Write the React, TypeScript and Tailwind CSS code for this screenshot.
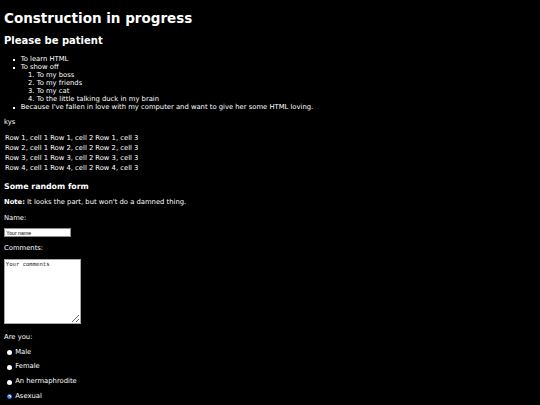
import React from "react";

function Bullet() {
  return <span className="w-[2px] h-[2px] bg-white mt-[3px] mr-[5.4px] shrink-0" />;
}

export default function App() {
  const rows = [1, 2, 3, 4];
  return (
    <div className="min-h-[405px] bg-black text-white px-[4px] pt-[10px] pb-[4px] text-[6.8px] leading-[7.9px] overflow-hidden font-['DejaVu_Sans',Verdana,sans-serif]">
      <h1 className="text-[13.5px] leading-[16px] font-bold m-0">Construction in progress</h1>
      <h2 className="text-[10px] leading-[12px] font-bold mt-[9.2px]">Please be patient</h2>
      <ul className="pl-[9.3px] mt-[9px]">
        <li className="flex">
          <Bullet />
          <span>To learn HTML</span>
        </li>
        <li className="flex">
          <Bullet />
          <div>
            <div>To show off</div>
            <ol className="list-decimal pl-[16px]">
              <li>To my boss</li>
              <li>To my friends</li>
              <li>To my cat</li>
              <li>To the little talking duck in my brain</li>
            </ol>
          </div>
        </li>
        <li className="flex">
          <Bullet />
          <span>Because I've fallen in love with my computer and want to give her some HTML loving.</span>
        </li>
      </ul>
      <p className="mt-[7.9px]">kys</p>
      <table className="mt-[6.2px] border-separate border-spacing-[1px] -ml-[0.5px]">
        <tbody>
          {rows.map((r) => (
            <tr key={r}>
              <td className="p-[0.5px] pb-[0.7px]">Row {r}, cell 1</td>
              <td className="p-[0.5px] pb-[0.7px]">Row {r}, cell 2</td>
              <td className="p-[0.5px] pb-[0.7px]">Row {r}, cell 3</td>
            </tr>
          ))}
        </tbody>
      </table>
      <h3 className="text-[7.85px] leading-[9.5px] font-bold mt-[7.4px]">Some random form</h3>
      <p className="mt-[7.4px]">
        <strong>Note:</strong> It looks the part, but won't do a damned thing.
      </p>
      <p className="mt-[7.6px]">Name:</p>
      <input
        type="text"
        placeholder="Your name"
        className="block mt-[5.6px] w-[66.5px] h-[9px] bg-white border border-[#8f8f8f] px-[1.2px] py-0 text-[5.2px] leading-[7px] text-black placeholder:text-black outline-none font-['Liberation_Sans',Arial,sans-serif]"
      />
      <p className="mt-[7.6px]">Comments:</p>
      <textarea
        placeholder="Your comments"
        className="block mt-[6.5px] w-[76.7px] h-[65px] bg-white border border-[#a9a9a9] px-[0.8px] py-[1px] text-[5.6px] leading-[6.5px] text-black placeholder:text-[#222] outline-none resize font-['DejaVu_Sans_Mono',monospace]"
      />
      <p className="mt-[10px]">Are you:</p>
      <div className="flex flex-col gap-[6.8px] mt-[6.6px]">
        {["Male", "Female", "An hermaphrodite", "Asexual"].map((g) => (
          <label key={g} className="flex items-center gap-[3.5px] pl-[2.7px]">
            {g === "Asexual" ? (
              <span className="w-[5px] h-[5px] rounded-full border-[1.2px] border-[#1a73e8] bg-white flex items-center justify-center">
                <span className="w-[2px] h-[2px] rounded-full bg-[#1a73e8]" />
              </span>
            ) : (
              <span className="w-[5px] h-[5px] rounded-full bg-white" />
            )}
            <span>{g}</span>
          </label>
        ))}
      </div>
    </div>
  );
}
